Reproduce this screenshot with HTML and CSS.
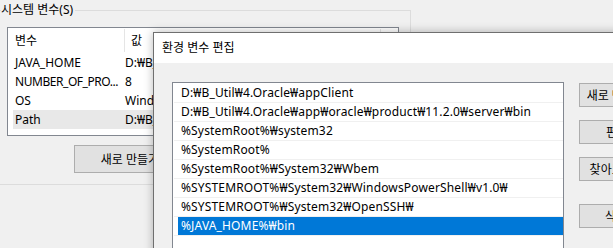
FILE: index.html
```html
<!DOCTYPE html>
<html lang="ko">

<head>
    <meta charset="UTF-8">
    <meta name="viewport" content="width=device-width, initial-scale=1.0">
    <title>환경 변수 편집</title>
    <link rel="stylesheet" href="styles.css">
</head>

<body>
    <div class="desk">
        <fieldset class="sysVars">
            <legend>시스템 변수(S)</legend>
            <div class="varList">
                <div class="varHead">
                    <span class="colName">변수</span>
                    <span class="colValue">값</span>
                    <span class="colRest"></span>
                </div>
                <div class="varRow">
                    <span class="colName">JAVA_HOME</span>
                    <span class="colValue">D:₩B_Util₩jdk1.8.0</span>
                </div>
                <div class="varRow">
                    <span class="colName tight">NUMBER_OF_PRO...</span>
                    <span class="colValue">8</span>
                </div>
                <div class="varRow">
                    <span class="colName">OS</span>
                    <span class="colValue">Windows_NT</span>
                </div>
                <div class="varRow picked">
                    <span class="colName">Path</span>
                    <span class="colValue">D:₩B_Util₩4.Oracle₩appClient;</span>
                </div>
            </div>
            <div class="sysButtons">
                <button type="button" class="winButton wide">새로 만들기(W)...</button>
            </div>
        </fieldset>

        <div class="dialog">
            <div class="dialogTitle">환경 변수 편집</div>
            <div class="dialogBody">
                <div class="pathList">
                    <div class="pathRow"><span>D:₩B_Util₩4.Oracle₩appClient</span></div>
                    <div class="pathRow"><span>D:₩B_Util₩4.Oracle₩app₩oracle₩product₩11.2.0₩server₩bin</span></div>
                    <div class="pathRow"><span>%SystemRoot%₩system32</span></div>
                    <div class="pathRow"><span>%SystemRoot%</span></div>
                    <div class="pathRow"><span>%SystemRoot%₩System32₩Wbem</span></div>
                    <div class="pathRow"><span>%SYSTEMROOT%₩System32₩WindowsPowerShell₩v1.0₩</span></div>
                    <div class="pathRow"><span>%SYSTEMROOT%₩System32₩OpenSSH₩</span></div>
                    <div class="pathRow selected"><span>%JAVA_HOME%₩bin</span></div>
                </div>
                <div class="pathButtons">
                    <button type="button" class="winButton">새로 만들기(N)</button>
                    <button type="button" class="winButton">편집(E)</button>
                    <button type="button" class="winButton">찾아보기(B)...</button>
                    <button type="button" class="winButton apart">삭제(D)</button>
                </div>
            </div>
        </div>
    </div>
</body>

</html>
```

FILE: styles.css
```css
body {
    margin: 0;
    background: #f0f0f0;
    font-family: "Noto Sans", "Noto Sans CJK KR", sans-serif;
    font-size: 12px;
    color: #000;
}

.desk {
    position: relative;
    width: 613px;
    height: 248px;
    overflow: hidden;
}

/* background window: system variables group */
.sysVars {
    width: 409px;
    margin: 2px 0 0 -6px;
    padding: 0 0 11px 6px;
    border: 1px solid #dcdcdc;
}

.sysVars>legend {
    padding: 0 2px 0 0;
    line-height: 16px;
}

.varList {
    width: 390px;
    height: 107px;
    margin: 9px 0 0 6px;
    border: 1px solid #828790;
    background: #fff;
}

.varHead,
.varRow {
    display: flex;
    align-items: center;
}

.varHead {
    height: 25px;
}

.varRow {
    height: 19px;
    margin-left: 5px;
}

.varRow.picked {
    background: #e8e8e8;
}

.colName {
    width: 109px;
    padding-left: 7px;
    white-space: nowrap;
    overflow: hidden;
}

.varRow .colName {
    width: 104px;
    padding-left: 2px;
}

.colName.tight {
    letter-spacing: -.45px;
}

.varHead .colName {
    padding-left: 7px;
    width: 109px;
    border-right: 1px solid #e5e5e5;
    height: 23px;
    line-height: 23px;
}

.colValue {
    padding-left: 6px;
    flex: 1;
    white-space: nowrap;
}

.varHead .colValue {
    height: 23px;
    line-height: 23px;
    border-right: 1px solid #e5e5e5;
}

.colRest {
    width: 17px;
}

.sysButtons {
    padding: 9px 0 0 73px;
}

.winButton {
    display: block;
    width: 90px;
    height: 24px;
    padding: 0;
    border: 1px solid #adadad;
    background: #e1e1e1;
    font: inherit;
    color: #000;
    white-space: nowrap;
}

.winButton.wide {
    width: 140px;
    height: 28px;
}

/* foreground dialog, a window on the desktop */
.dialog {
    position: absolute;
    left: 153px;
    top: 32px;
    width: 520px;
    height: 260px;
    border: 1px solid #6f6f6f;
    background: #f0f0f0;
    box-shadow: 0 0 9px rgba(0, 0, 0, .28);
}

.dialogTitle {
    height: 30px;
    line-height: 29px;
    padding-left: 8px;
    background: #fff;
}

.dialogBody {
    display: flex;
    gap: 15px;
    padding: 19px 0 0 18px;
}

.pathList {
    flex: none;
    width: 390px;
    height: 200px;
    padding-top: 1px;
    border: 1px solid #828790;
    background: #fff;
    letter-spacing: .15px;
}

.pathRow {
    height: 18px;
    margin-left: 1px;
    border-bottom: 1px solid #f0f0f0;
}

.pathRow>span {
    display: block;
    height: 18px;
    line-height: 18px;
    margin-left: 4px;
    padding-left: 3px;
    white-space: nowrap;
}

.pathRow.selected>span {
    background: #0078d7;
    color: #fff;
}

.pathButtons {
    display: flex;
    flex-direction: column;
    gap: 13px;
    padding-top: 1px;
}

.pathButtons>.apart {
    margin-top: 10px;
}
```
